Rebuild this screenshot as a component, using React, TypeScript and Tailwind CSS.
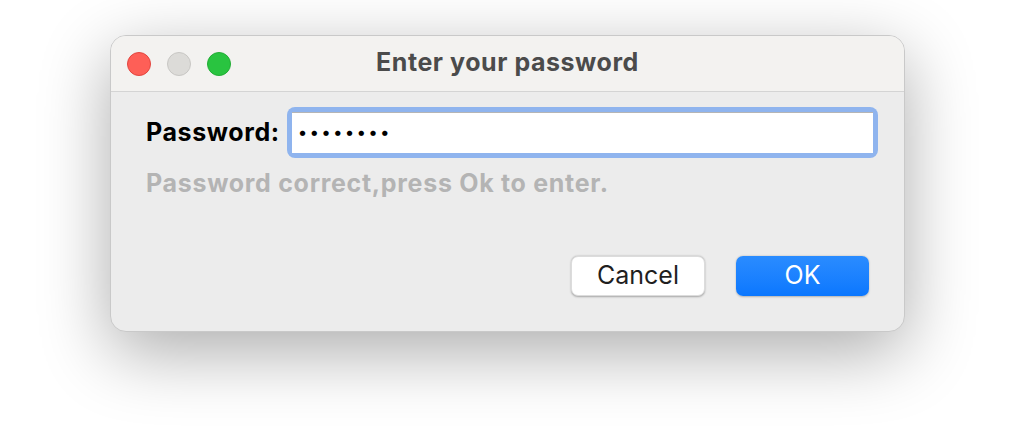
import React from "react";

export default function App() {
  return (
    <div className="w-[1024px] h-[435px] bg-white overflow-hidden pl-[110px] pt-[35px]" style={{ fontFamily: "Inter, 'Liberation Sans', sans-serif" }}>
      <div className="w-[795px] h-[297px] rounded-[16px] border border-[#c9c9c9] bg-[#ececec] overflow-hidden flex flex-col shadow-[0_20px_70px_rgba(0,0,0,0.33)]">
        <div className="h-[56px] shrink-0 bg-[#f3f2f0] border-b border-[#d4d4d4] flex items-center relative">
          <div className="flex items-center gap-[16px] pl-[16px]">
            <div className="w-[24px] h-[24px] rounded-full bg-[#fe5f57] border border-[#e2463f]" />
            <div className="w-[24px] h-[24px] rounded-full bg-[#dcdbd8] border border-[#c8c7c4]" />
            <div className="w-[24px] h-[24px] rounded-full bg-[#29c440] border border-[#22ad35]" />
          </div>
          <div className="absolute inset-0 flex items-center justify-center text-[25px] font-bold text-[#4b4b4b] tracking-[0.55px] pb-[2px]">
            Enter your password
          </div>
        </div>
        <div className="flex-1 flex flex-col pl-[35px] pt-[15px]">
          <div className="flex items-center">
            <span className="text-[25px] font-bold text-black tracking-[0.6px]">Password:</span>
            <div className="ml-[7px] shrink-0 w-[591px] h-[51px] rounded-[8px] bg-[#8fb4ee] p-[5px]">
              <div className="w-full h-full bg-white border-t border-[#b5b5b5] flex items-center pl-[6px] text-[17px] tracking-[2.2px] text-black">
                ••••••••
              </div>
            </div>
          </div>
          <div className="mt-[10px] text-[25px] font-bold text-[#b4b4b4] tracking-[0.7px] leading-[30px]">
            Password correct,press Ok to enter.
          </div>
          <div className="flex justify-end gap-[31px] mt-[58px] pr-[35px]">
            <button className="w-[134px] h-[40px] rounded-[7px] bg-white text-[25px] text-[#1f1f1f] shadow-[0_0.5px_2px_rgba(0,0,0,0.3)] border border-[#dcdcdc]">
              Cancel
            </button>
            <button className="w-[133px] h-[40px] rounded-[7px] bg-gradient-to-b from-[#2a8cff] to-[#0a77fe] text-[25px] text-white shadow-[0_0.5px_2px_rgba(0,0,0,0.25)]">
              OK
            </button>
          </div>
        </div>
      </div>
    </div>
  );
}
